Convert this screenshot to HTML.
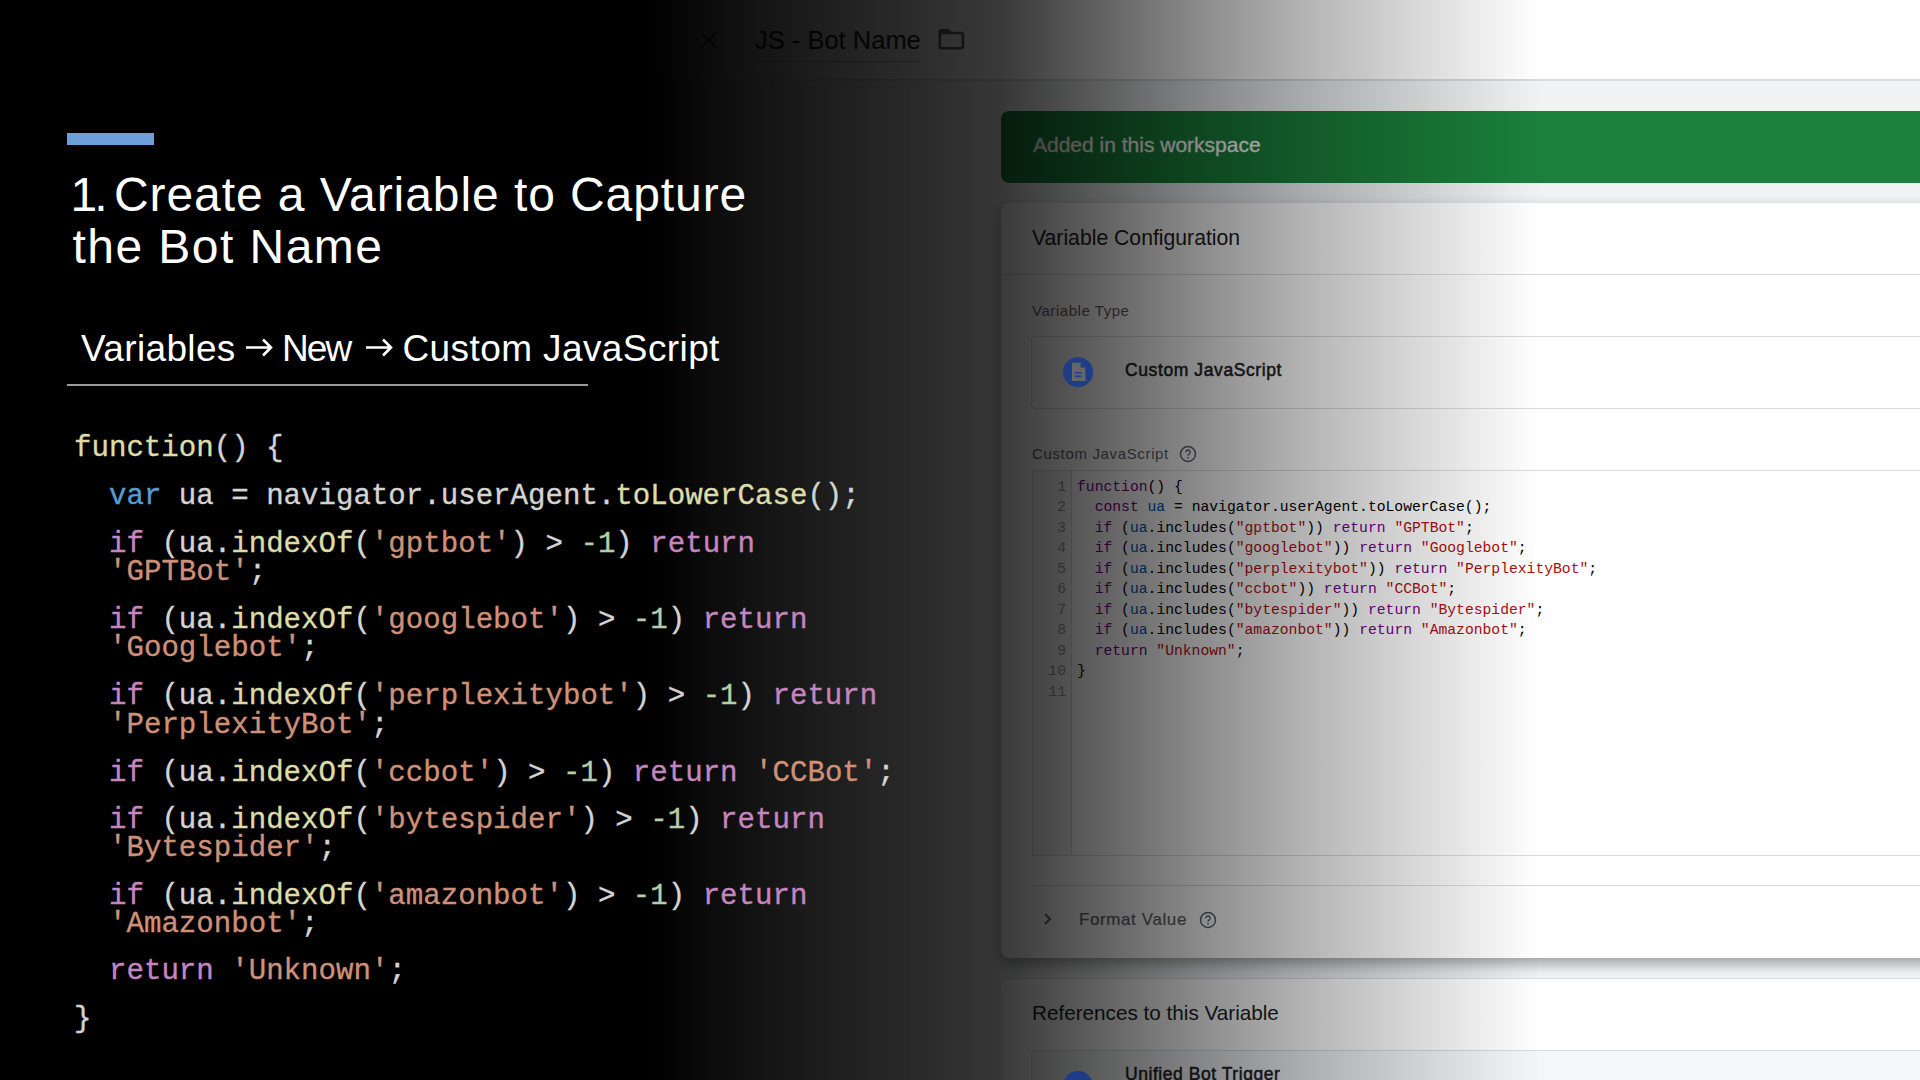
<!DOCTYPE html>
<html><head><meta charset="utf-8">
<style>
*{margin:0;padding:0;box-sizing:border-box}
html,body{width:1920px;height:1080px;overflow:hidden;background:#000}
body{position:relative;font-family:"Liberation Sans",sans-serif}
.abs{position:absolute}
#shot{position:absolute;left:0;top:0;width:1920px;height:1080px;background:#f1f2f4;overflow:hidden}
#hdr{position:absolute;left:0;top:0;width:1920px;height:81px;background:#fff;border-bottom:2px solid #d9dadc}
.t{position:absolute;white-space:pre;line-height:normal}
.green{position:absolute;left:1001px;top:111px;width:1000px;height:72px;background:#1a803a;border-radius:8px}
.card{position:absolute;left:1001px;width:1000px;background:#fff;border-radius:8px}
.hl{position:absolute;height:1px;background:#dadce0}
.mono{font-family:"Liberation Mono",monospace}
#ov{position:absolute;left:0;top:0;width:1920px;height:1080px;
 background:linear-gradient(to right,rgba(0,0,0,1) 0px,rgba(0,0,0,1) 650px,rgba(0,0,0,0.961) 700px,rgba(0,0,0,0.894) 800px,rgba(0,0,0,0.839) 900px,rgba(0,0,0,0.776) 1000px,rgba(0,0,0,0.702) 1050px,rgba(0,0,0,0.62) 1100px,rgba(0,0,0,0.455) 1200px,rgba(0,0,0,0.302) 1300px,rgba(0,0,0,0.173) 1400px,rgba(0,0,0,0.047) 1500px,rgba(0,0,0,0) 1540px)}
#slide{position:absolute;left:0;top:0;width:1920px;height:1080px}
.code{position:absolute;font-family:"Liberation Mono",monospace;font-size:29.1px;line-height:normal;white-space:pre;color:#d4d4d4;-webkit-text-stroke:0.35px currentColor}
.fn{color:#dcdcaa}.kw{color:#569cd6}.ct{color:#c586c0}.st{color:#ce9178}.nu{color:#b5cea8}
.ed{position:absolute;font-family:"Liberation Mono",monospace;font-size:14.7px;line-height:normal;white-space:pre;color:#000}
.k{color:#708}.v{color:#05a}.s{color:#a11}
.ln{position:absolute;font-family:"Liberation Mono",monospace;font-size:14.7px;line-height:normal;color:#999;text-align:right;width:30px;left:1036px}
</style></head><body>
<div id="shot">
  <div id="hdr"></div>
  <!-- header contents -->
  <svg class="abs" style="left:699px;top:31px" width="19" height="18" viewBox="0 0 19 18"><path d="M2.5 2L16.5 16M16.5 2L2.5 16" stroke="#5f6368" stroke-width="2.8"/></svg>
  <div class="t" style="left:755px;top:25.5px;font-size:25.5px;color:#202124">JS - Bot Name</div>
  <div class="abs" style="left:755px;top:61px;width:165px;height:1px;background:#b8b8b8"></div>
  <svg class="abs" style="left:935.5px;top:24.2px" width="30.7" height="30.7" viewBox="0 0 24 24"><path d="M20 6h-8l-2-2H4c-1.1 0-2 .9-2 2v12c0 1.1.9 2 2 2h16c1.1 0 2-.9 2-2V8c0-1.1-.9-2-2-2zm0 12H4V8h16v10z" fill="#5f6368"/></svg>

  <div class="green"></div>
  <div class="t" style="left:1033px;top:133px;font-size:21px;color:#fff;-webkit-text-stroke:0.3px #fff">Added in this workspace</div>

  <div class="card" style="top:203px;height:755px;box-shadow:0 6px 14px rgba(0,0,0,.35)"></div>

  <div class="t" style="left:1032px;top:226px;font-size:21.2px;color:#202124">Variable Configuration</div>
  <div class="hl" style="left:1001px;top:274px;width:919px"></div>
  <div class="t" style="left:1032px;top:302px;font-size:15px;color:#5f6368;letter-spacing:0.55px">Variable Type</div>
  <div class="abs" style="left:1031px;top:336px;width:1000px;height:73px;border:1px solid #dadce0;border-radius:4px"></div>
  
  <div class="t" style="left:1125px;top:360px;font-size:17.5px;color:#202124;letter-spacing:0.6px;-webkit-text-stroke:0.5px #202124">Custom JavaScript</div>
  <div class="t" style="left:1032px;top:445px;font-size:15px;color:#5f6368;letter-spacing:0.65px">Custom JavaScript</div>
  <svg class="abs" style="left:1179px;top:445px" width="18" height="18" viewBox="0 0 18 18"><circle cx="9" cy="9" r="7.5" fill="none" stroke="#5f6368" stroke-width="1.5"/><path d="M6.8 7.2a2.2 2.2 0 1 1 3.2 2c-.7.4-1 .8-1 1.6" fill="none" stroke="#5f6368" stroke-width="1.4"/><circle cx="9" cy="12.8" r=".9" fill="#5f6368"/></svg>
  <div class="abs" style="left:1032px;top:470px;width:1000px;height:386px;border:1px solid #dddddd;background:#fff"></div>
  <div class="abs" style="left:1033px;top:471px;width:39px;height:384px;background:#f7f7f7;border-right:1px solid #dddddd"></div>
  <div class="ln" style="top:478.8px">1</div>
<div class="ed" style="left:1077px;top:478.8px"><span class="k">function</span>() {</div>
<div class="ln" style="top:499.3px">2</div>
<div class="ed" style="left:1077px;top:499.3px">  <span class="k">const</span> <span class="v">ua</span> = navigator.userAgent.toLowerCase();</div>
<div class="ln" style="top:519.8px">3</div>
<div class="ed" style="left:1077px;top:519.8px">  <span class="k">if</span> (<span class="v">ua</span>.includes(<span class="s">"gptbot"</span>)) <span class="k">return</span> <span class="s">"GPTBot"</span>;</div>
<div class="ln" style="top:540.3px">4</div>
<div class="ed" style="left:1077px;top:540.3px">  <span class="k">if</span> (<span class="v">ua</span>.includes(<span class="s">"googlebot"</span>)) <span class="k">return</span> <span class="s">"Googlebot"</span>;</div>
<div class="ln" style="top:560.8px">5</div>
<div class="ed" style="left:1077px;top:560.8px">  <span class="k">if</span> (<span class="v">ua</span>.includes(<span class="s">"perplexitybot"</span>)) <span class="k">return</span> <span class="s">"PerplexityBot"</span>;</div>
<div class="ln" style="top:581.3px">6</div>
<div class="ed" style="left:1077px;top:581.3px">  <span class="k">if</span> (<span class="v">ua</span>.includes(<span class="s">"ccbot"</span>)) <span class="k">return</span> <span class="s">"CCBot"</span>;</div>
<div class="ln" style="top:601.8px">7</div>
<div class="ed" style="left:1077px;top:601.8px">  <span class="k">if</span> (<span class="v">ua</span>.includes(<span class="s">"bytespider"</span>)) <span class="k">return</span> <span class="s">"Bytespider"</span>;</div>
<div class="ln" style="top:622.3px">8</div>
<div class="ed" style="left:1077px;top:622.3px">  <span class="k">if</span> (<span class="v">ua</span>.includes(<span class="s">"amazonbot"</span>)) <span class="k">return</span> <span class="s">"Amazonbot"</span>;</div>
<div class="ln" style="top:642.8px">9</div>
<div class="ed" style="left:1077px;top:642.8px">  <span class="k">return</span> <span class="s">"Unknown"</span>;</div>
<div class="ln" style="top:663.3px">10</div>
<div class="ed" style="left:1077px;top:663.3px">}</div>
<div class="ln" style="top:683.8px">11</div>
  <div class="hl" style="left:1032px;top:885px;width:900px"></div>
  <svg class="abs" style="left:1040px;top:911px" width="16" height="16" viewBox="0 0 16 16"><path d="M5 3l5 5-5 5" fill="none" stroke="#5f6368" stroke-width="1.8"/></svg>
  <div class="t" style="left:1079px;top:910px;font-size:17px;color:#5f6368;letter-spacing:0.6px;-webkit-text-stroke:0.2px #5f6368">Format Value</div>
  <svg class="abs" style="left:1199px;top:911px" width="18" height="18" viewBox="0 0 18 18"><circle cx="9" cy="9" r="7.5" fill="none" stroke="#5f6368" stroke-width="1.5"/><path d="M6.8 7.2a2.2 2.2 0 1 1 3.2 2c-.7.4-1 .8-1 1.6" fill="none" stroke="#5f6368" stroke-width="1.4"/><circle cx="9" cy="12.8" r=".9" fill="#5f6368"/></svg>

  <div class="card" style="top:978px;height:200px;border-top:1px solid #dadce0"></div>

  <div class="t" style="left:1032px;top:1001px;font-size:20.7px;color:#202124">References to this Variable</div>
  <div class="abs" style="left:1031px;top:1050px;width:1000px;height:80px;border:1px solid #dadce0;border-radius:4px;background:#f5f6f8"></div>
  
  <div class="t" style="left:1125px;top:1064px;font-size:17.5px;color:#202124;letter-spacing:0.55px;-webkit-text-stroke:0.5px #202124">Unified Bot Trigger</div>

</div>
<div id="ov"></div>
<div id="slide">
  <div class="abs" style="left:67px;top:132.5px;width:87px;height:12px;background:#6c9fd9"></div>
  <div class="t" style="left:70.5px;top:167.2px;font-size:48px;color:#fff;letter-spacing:-3px">1.</div>
  <div class="t" style="left:114px;top:167.2px;font-size:48px;color:#fff;letter-spacing:0.92px">Create a Variable to Capture</div>
  <div class="t" style="left:72.5px;top:218.6px;font-size:48px;color:#fff;letter-spacing:1.45px">the Bot Name</div>
  <div class="t" style="left:81px;top:327.5px;font-size:37px;color:#fff;letter-spacing:0.35px">Variables</div>
  <svg class="abs" style="left:244px;top:337px" width="30" height="21" viewBox="0 0 30 21"><path d="M2 10.5H27M19 2.5L27 10.5L19 18.5" fill="none" stroke="#fff" stroke-width="2.6"/></svg>
  <div class="t" style="left:282px;top:327.5px;font-size:37px;color:#fff;letter-spacing:-1.9px">New</div>
  <svg class="abs" style="left:364px;top:337px" width="30" height="21" viewBox="0 0 30 21"><path d="M2 10.5H27M19 2.5L27 10.5L19 18.5" fill="none" stroke="#fff" stroke-width="2.6"/></svg>
  <div class="t" style="left:402.5px;top:327.5px;font-size:37px;color:#fff;letter-spacing:0.4px">Custom JavaScript</div>
  <div class="abs" style="left:67px;top:384px;width:521px;height:2px;background:#9a9a9a"></div>

  <svg class="abs" style="left:1062px;top:356px" width="32" height="32" viewBox="0 0 32 32"><circle cx="16" cy="16.2" r="15" fill="#1e3c88"/><path d="M10 6.7h8.6l4.8 4.8v13.4H10z" fill="#666"/><path d="M18.6 6.7v4.8h4.8z" fill="#1e3c88"/><path d="M13 16.7h6.5M13 20.4h6.5" stroke="#1e3c88" stroke-width="1.6"/></svg>
  <svg class="abs" style="left:1062px;top:1070px" width="32" height="32" viewBox="0 0 32 32"><circle cx="16" cy="16" r="15" fill="#1e3c88"/></svg>
<div class="code" style="left:74px;top:431.8px"><span class="fn">function</span>() {</div>
<div class="code" style="left:109px;top:479.8px"><span class="kw">var</span> ua = navigator.userAgent.<span class="fn">toLowerCase</span>();</div>
<div class="code" style="left:109px;top:527.8px"><span class="ct">if</span> (ua.<span class="fn">indexOf</span>(<span class="st">'gptbot'</span>) &gt; <span class="nu">-1</span>) <span class="ct">return</span></div>
<div class="code" style="left:109px;top:555.8px"><span class="st">'GPTBot'</span>;</div>
<div class="code" style="left:109px;top:603.8px"><span class="ct">if</span> (ua.<span class="fn">indexOf</span>(<span class="st">'googlebot'</span>) &gt; <span class="nu">-1</span>) <span class="ct">return</span></div>
<div class="code" style="left:109px;top:631.8px"><span class="st">'Googlebot'</span>;</div>
<div class="code" style="left:109px;top:679.8px"><span class="ct">if</span> (ua.<span class="fn">indexOf</span>(<span class="st">'perplexitybot'</span>) &gt; <span class="nu">-1</span>) <span class="ct">return</span></div>
<div class="code" style="left:109px;top:708.8px"><span class="st">'PerplexityBot'</span>;</div>
<div class="code" style="left:109px;top:756.8px"><span class="ct">if</span> (ua.<span class="fn">indexOf</span>(<span class="st">'ccbot'</span>) &gt; <span class="nu">-1</span>) <span class="ct">return</span> <span class="st">'CCBot'</span>;</div>
<div class="code" style="left:109px;top:803.8px"><span class="ct">if</span> (ua.<span class="fn">indexOf</span>(<span class="st">'bytespider'</span>) &gt; <span class="nu">-1</span>) <span class="ct">return</span></div>
<div class="code" style="left:109px;top:831.8px"><span class="st">'Bytespider'</span>;</div>
<div class="code" style="left:109px;top:879.8px"><span class="ct">if</span> (ua.<span class="fn">indexOf</span>(<span class="st">'amazonbot'</span>) &gt; <span class="nu">-1</span>) <span class="ct">return</span></div>
<div class="code" style="left:109px;top:907.8px"><span class="st">'Amazonbot'</span>;</div>
<div class="code" style="left:109px;top:954.8px"><span class="ct">return</span> <span class="st">'Unknown'</span>;</div>
<div class="code" style="left:74px;top:1002.8px">}</div>
</div>
</body></html>
